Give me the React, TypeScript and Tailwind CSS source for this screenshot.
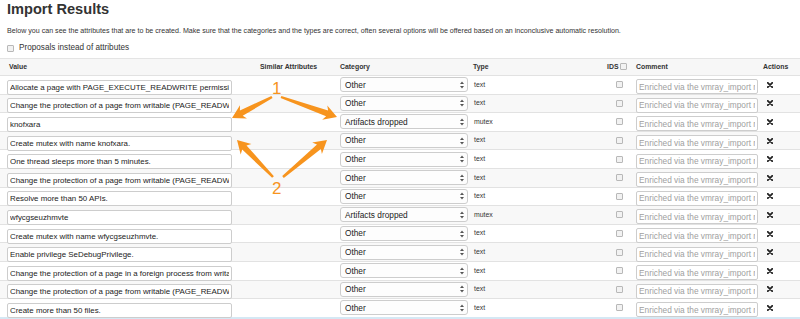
import React from "react";

const rows: { v: string; cat: string; type: string }[] = [
  { v: "Allocate a page with PAGE_EXECUTE_READWRITE permission.", cat: "Other", type: "text" },
  { v: "Change the protection of a page from writable (PAGE_READWRITE) to executable (PAGE_EXECUTE).", cat: "Other", type: "text" },
  { v: "knofxara", cat: "Artifacts dropped", type: "mutex" },
  { v: "Create mutex with name knofxara.", cat: "Other", type: "text" },
  { v: "One thread sleeps more than 5 minutes.", cat: "Other", type: "text" },
  { v: "Change the protection of a page from writable (PAGE_READWRITE) to executable (PAGE_EXECUTE).", cat: "Other", type: "text" },
  { v: "Resolve more than 50 APIs.", cat: "Other", type: "text" },
  { v: "wfycgseuzhmvte", cat: "Artifacts dropped", type: "mutex" },
  { v: "Create mutex with name wfycgseuzhmvte.", cat: "Other", type: "text" },
  { v: "Enable privilege SeDebugPrivilege.", cat: "Other", type: "text" },
  { v: "Change the protection of a page in a foreign process from writable to executable.", cat: "Other", type: "text" },
  { v: "Change the protection of a page from writable (PAGE_READWRITE) to executable (PAGE_EXECUTE).", cat: "Other", type: "text" },
  { v: "Create more than 50 files.", cat: "Other", type: "text" },
];

function Check() {
  return <span className="inline-block w-[7px] h-[7px] border border-[#b8b8b8] bg-[#f2f2f2] rounded-[1px]" />;
}

function Sel({ label }: { label: string }) {
  return (
    <div className="w-[128px] h-[15px] border border-[#cdcdcd] rounded-[3px] bg-[#fdfdfd] flex items-center pl-[4px] pr-[3px] text-[8.3px] text-[#222]">
      <span className="flex-1">{label}</span>
      <svg width="4" height="8" viewBox="0 0 4 8">
        <path d="M0 3 L2 0.5 L4 3 Z" fill="#555" />
        <path d="M0 5 L2 7.5 L4 5 Z" fill="#555" />
      </svg>
    </div>
  );
}

function XIcon() {
  return (
    <svg width="6" height="6" viewBox="0 0 6 6">
      <path d="M0.8 0.8 L5.2 5.2 M5.2 0.8 L0.8 5.2" stroke="#222" strokeWidth="1.8" strokeLinecap="round" />
    </svg>
  );
}

function arrowPts(tx: number, ty: number, px: number, py: number) {
  const dx = px - tx;
  const dy = py - ty;
  const L = Math.hypot(dx, dy);
  const ux = dx / L;
  const uy = dy / L;
  const nx = -uy;
  const ny = ux;
  const hl = 13;
  const hw = 7.5;
  const bx = px - ux * hl;
  const by = py - uy * hl;
  const bx2 = px - ux * (hl - 2.5);
  const by2 = py - uy * (hl - 2.5);
  const pts = [
    [tx + nx * 1.2, ty + ny * 1.2],
    [bx2 + nx * 3, by2 + ny * 3],
    [bx + nx * hw, by + ny * hw],
    [px, py],
    [bx - nx * hw, by - ny * hw],
    [bx2 - nx * 3, by2 - ny * 3],
    [tx - nx * 1.2, ty - ny * 1.2],
  ];
  return pts.map((p) => p.map((n) => n.toFixed(1)).join(",")).join(" ");
}

const ff = { fontFamily: '"Liberation Sans", Arial, sans-serif' };

export default function App() {
  return (
    <div className="relative w-[800px] h-[319px] overflow-hidden bg-white text-[#333]" style={ff}>
      <div className="pl-[7px] text-[14.6px] leading-[18px] font-bold text-[#333]">Import Results</div>
      <div className="pl-[7px] mt-[8px] text-[7.1px] leading-[10px] text-[#333]">
        Below you can see the attributes that are to be created. Make sure that the categories and the types are correct, often several options will be offered based on an inconclusive automatic resolution.
      </div>
      <div className="pl-[7px] mt-[6px] h-[12px] flex items-center gap-[4px] text-[8.2px]">
        <Check />
        <span className="ml-[1px]">Proposals instead of attributes</span>
      </div>
      <div className="mt-[4px] border-t border-[#e4e4e4]">
        <div className="flex items-center h-[16px] pl-[7px] bg-[#f7f7f7] text-[6.9px] font-bold text-[#333]">
          <div className="w-[253px] pl-[2px]">Value</div>
          <div className="w-[80px]">Similar Attributes</div>
          <div className="w-[133px]">Category</div>
          <div className="w-[134px]">Type</div>
          <div className="w-[29px] flex items-center gap-[1px]">
            <span>IDS</span>
            <Check />
          </div>
          <div className="w-[127px]">Comment</div>
          <div>Actions</div>
        </div>
        {rows.map((r, i) => (
          <div key={i} className={`flex items-center h-[18.6px] pl-[7px] border-t border-[#e2e2e2] ${i % 2 === 1 ? "bg-[#f8f8f8]" : "bg-white"}`}>
            <div className="w-[253px]">
              <input
                readOnly
                value={r.v}
                className="w-[225px] h-[15px] border border-[#cdcdcd] rounded-[2px] bg-white px-[2px] text-[7.9px] text-[#222] outline-none"
                style={ff}
              />
            </div>
            <div className="w-[80px]" />
            <div className="w-[133px]">
              <Sel label={r.cat} />
            </div>
            <div className="w-[134px] text-[6.9px] pl-[1px]">{r.type}</div>
            <div className="w-[29px] flex items-center pl-[9px]">
              <Check />
            </div>
            <div className="w-[127px]">
              <input
                readOnly
                placeholder="Enriched via the vmray_import module"
                className="w-[122px] h-[15px] border border-[#cdcdcd] rounded-[2px] bg-white px-[2px] text-[8.3px] placeholder:text-[#a0a0a0] outline-none"
                style={ff}
              />
            </div>
            <div className="pl-[4px] flex items-center">
              <XIcon />
            </div>
          </div>
        ))}
        <div className="h-[3px] bg-[#d5e8f4]" />
      </div>

      <svg className="absolute left-0 top-0 pointer-events-none" width="800" height="319">
        <polygon points={arrowPts(272, 97, 232, 118)} fill="#f7941e" />
        <polygon points={arrowPts(281, 97, 337, 117)} fill="#f7941e" />
        <polygon points={arrowPts(273, 177, 237, 140)} fill="#f7941e" />
        <polygon points={arrowPts(283, 177, 327, 140)} fill="#f7941e" />
      </svg>
      <div className="absolute left-[272px] top-[79px] text-[17px] leading-[19px] text-[#f7941e]" style={ff}>1</div>
      <div className="absolute left-[272px] top-[179px] text-[17px] leading-[19px] text-[#f7941e]" style={ff}>2</div>
    </div>
  );
}
